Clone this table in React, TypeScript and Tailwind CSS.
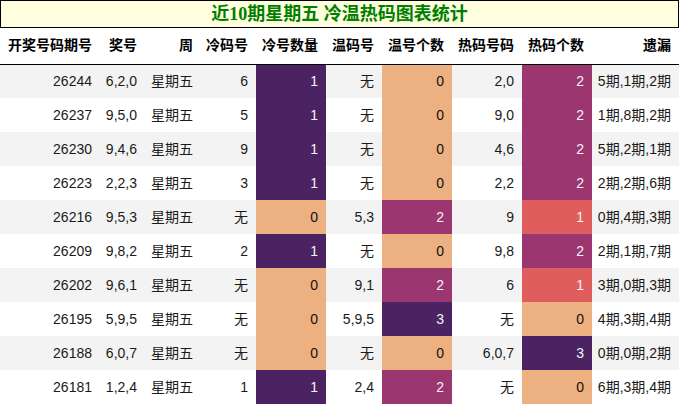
const rows = [
  { qi: "26244", hao: "6,2,0", cold: "6", cn: 1, warm: "无", wn: 0, hot: "2,0", hn: 2, miss: "5期,1期,2期" },
  { qi: "26237", hao: "9,5,0", cold: "5", cn: 1, warm: "无", wn: 0, hot: "9,0", hn: 2, miss: "1期,8期,2期" },
  { qi: "26230", hao: "9,4,6", cold: "9", cn: 1, warm: "无", wn: 0, hot: "4,6", hn: 2, miss: "5期,2期,1期" },
  { qi: "26223", hao: "2,2,3", cold: "3", cn: 1, warm: "无", wn: 0, hot: "2,2", hn: 2, miss: "2期,2期,6期" },
  { qi: "26216", hao: "9,5,3", cold: "无", cn: 0, warm: "5,3", wn: 2, hot: "9", hn: 1, miss: "0期,4期,3期" },
  { qi: "26209", hao: "9,8,2", cold: "2", cn: 1, warm: "无", wn: 0, hot: "9,8", hn: 2, miss: "2期,1期,7期" },
  { qi: "26202", hao: "9,6,1", cold: "无", cn: 0, warm: "9,1", wn: 2, hot: "6", hn: 1, miss: "3期,0期,3期" },
  { qi: "26195", hao: "5,9,5", cold: "无", cn: 0, warm: "5,9,5", wn: 3, hot: "无", hn: 0, miss: "4期,3期,4期" },
  { qi: "26188", hao: "6,0,7", cold: "无", cn: 0, warm: "无", wn: 0, hot: "6,0,7", hn: 3, miss: "0期,0期,2期" },
  { qi: "26181", hao: "1,2,4", cold: "1", cn: 1, warm: "2,4", wn: 2, hot: "无", hn: 0, miss: "6期,3期,4期" },
];

// colour per column, scaled by that column's max (flare palette)
const heat = (v: number, max: number) => {
  const t = max === 0 ? 0 : v / max;
  if (t <= 0) return "bg-[#edb081] text-[#111]";
  if (t < 0.5) return "bg-[#e05d5d] text-[#f5f5f5]";
  if (t < 1) return "bg-[#9b3670] text-[#f5f5f5]";
  return "bg-[#4b2362] text-[#f5f5f5]";
};

const heads = ["开奖号码期号", "奖号", "周", "冷码号", "冷号数量", "温码号", "温号个数", "热码号码", "热码个数", "遗漏"];
const widths = ["w-[100px]", "w-[45px]", "w-[56px]", "w-[55px]", "w-[70px]", "w-[56px]", "w-[70px]", "w-[70px]", "w-[70px]", "w-[87px]"];

const App = () => {
  const maxC = Math.max(...rows.map((r) => r.cn));
  const maxW = Math.max(...rows.map((r) => r.wn));
  const maxH = Math.max(...rows.map((r) => r.hn));
  const td = "h-[34px] pr-2 pl-1 text-right whitespace-nowrap";

  return (
    <div className="w-[679px] bg-white font-['Liberation_Sans','Noto_Sans_CJK_SC',sans-serif] text-[14px] text-[#1a1a1a]">
      <div className="h-[28px] border border-black bg-[#ffffe0] flex items-center justify-center font-['Liberation_Serif','Noto_Sans_CJK_SC',serif] text-[18px] font-bold text-[#008000]">
        近10期星期五 冷温热码图表统计
      </div>
      <table className="w-[679px] table-fixed border-collapse">
        <colgroup>
          {widths.map((w, i) => (
            <col key={i} className={w} />
          ))}
        </colgroup>
        <thead>
          <tr className="border-b border-black">
            {heads.map((h, i) => (
              <th key={i} className="h-[36px] pr-2 text-right font-bold text-black whitespace-nowrap">
                {h}
              </th>
            ))}
          </tr>
        </thead>
        <tbody>
          {rows.map((r, i) => (
            <tr key={r.qi} className={i % 2 === 0 ? "bg-[#f3f3f3]" : "bg-white"}>
              <td className={td}>{r.qi}</td>
              <td className={td}>{r.hao}</td>
              <td className={td}>星期五</td>
              <td className={td}>{r.cold}</td>
              <td className={`${td} ${heat(r.cn, maxC)}`}>{r.cn}</td>
              <td className={td}>{r.warm}</td>
              <td className={`${td} ${heat(r.wn, maxW)}`}>{r.wn}</td>
              <td className={td}>{r.hot}</td>
              <td className={`${td} ${heat(r.hn, maxH)}`}>{r.hn}</td>
              <td className={td}>{r.miss}</td>
            </tr>
          ))}
        </tbody>
      </table>
    </div>
  );
};

export default App;
